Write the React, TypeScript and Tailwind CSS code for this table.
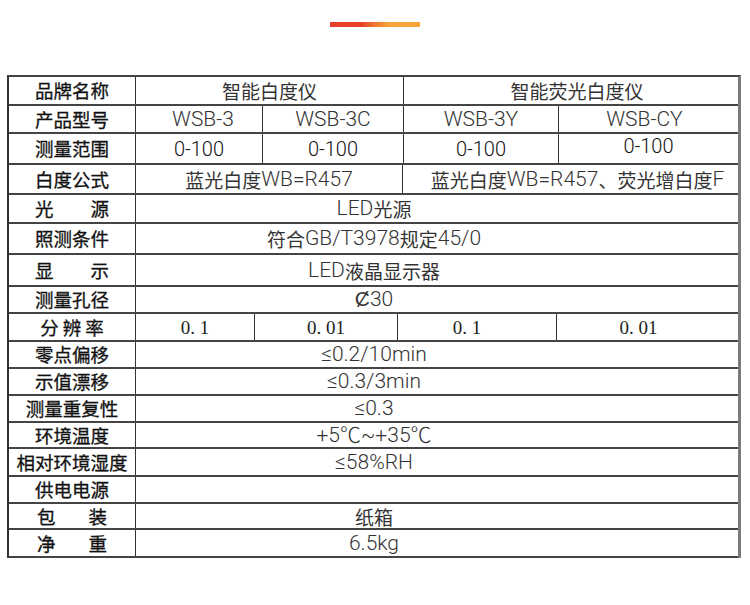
import React from "react";

type Cell = { w?: number; text: string; kind?: "sans" | "mono" | "num"; extra?: string };
type Row = { h: number; label: React.ReactNode; cells: Cell[] };

const sp2 = (a: string, b: string, w = 74) => (
  <span className="flex justify-between" style={{ width: w }}>
    <span>{a}</span>
    <span>{b}</span>
  </span>
);

const FULL = "pr-[126px]";

const rows: Row[] = [
  { h: 29, label: "品牌名称", cells: [{ w: 268, text: "智能白度仪" }, { text: "智能荧光白度仪", extra: "pl-[12px]" }] },
  {
    h: 28,
    label: "产品型号",
    cells: [
      { w: 127, text: "WSB-3", extra: "pl-[8px]" },
      { w: 141, text: "WSB-3C" },
      { w: 155, text: "WSB-3Y" },
      { text: "WSB-CY", extra: "pr-[8px]" },
    ],
  },
  {
    h: 31,
    label: "测量范围",
    cells: [
      { w: 127, text: "0-100", kind: "num" },
      { w: 141, text: "0-100", kind: "num" },
      { w: 155, text: "0-100", kind: "num" },
      { text: "0-100", kind: "num", extra: "pb-[5px]" },
    ],
  },
  { h: 30, label: "白度公式", cells: [{ w: 267, text: "蓝光白度WB=R457" }, { text: "蓝光白度WB=R457、荧光增白度F", extra: "pl-[14px]" }] },
  { h: 29, label: sp2("光", "源"), cells: [{ text: "LED光源", extra: FULL }] },
  { h: 31, label: "照测条件", cells: [{ text: "符合GB/T3978规定45/0", extra: FULL }] },
  { h: 32, label: sp2("显", "示"), cells: [{ text: "LED液晶显示器", extra: FULL }] },
  { h: 27, label: "测量孔径", cells: [{ text: "Ȼ30", extra: FULL }] },
  {
    h: 28,
    label: (
      <span className="flex gap-[4px]">
        <span>分</span>
        <span>辨</span>
        <span>率</span>
      </span>
    ),
    cells: [
      { w: 119, text: "0. 1", kind: "mono" },
      { w: 143, text: "0. 01", kind: "mono" },
      { w: 159, text: "0. 1", kind: "mono", extra: "pr-[20px]" },
      { text: "0. 01", kind: "mono", extra: "pr-[18px]" },
    ],
  },
  { h: 27, label: "零点偏移", cells: [{ text: "≤0.2/10min", extra: FULL }] },
  { h: 27, label: "示值漂移", cells: [{ text: "≤0.3/3min", extra: FULL }] },
  { h: 27, label: "测量重复性", cells: [{ text: "≤0.3", extra: FULL }] },
  { h: 26, label: "环境温度", cells: [{ text: "+5℃~+35℃", extra: FULL }] },
  { h: 28, label: "相对环境湿度", cells: [{ text: "≤58%RH", extra: FULL }] },
  { h: 27, label: "供电电源", cells: [{ text: "", extra: FULL }] },
  { h: 26, label: sp2("包", "装", 70), cells: [{ text: "纸箱", extra: FULL }] },
  { h: 28, label: sp2("净", "重", 70), cells: [{ text: "6.5kg", extra: FULL }] },
];

function splitRuns(s: string) {
  const out: { cjk: boolean; t: string }[] = [];
  for (const ch of Array.from(s)) {
    const cjk = /[\u3000-\u30ff\u3400-\u9fff\uff00-\uffef]/.test(ch);
    const last = out[out.length - 1];
    if (last && last.cjk === cjk) last.t += ch;
    else out.push({ cjk, t: ch });
  }
  return out;
}

function Mixed({ text, num }: { text: string; num?: boolean }) {
  return (
    <>
      {splitRuns(text).map((r, i) =>
        r.cjk ? (
          <span key={i} className="font-['Noto_Sans_CJK_SC',sans-serif] text-[19px] font-normal">
            {r.t}
          </span>
        ) : (
          <span
            key={i}
            className={
              num
                ? "font-['Roboto','Noto_Sans_CJK_SC',sans-serif] text-[20px] font-light text-[#111]"
                : "font-['Roboto','Noto_Sans_CJK_SC',sans-serif] text-[21px] font-light"
            }
          >
            {r.t}
          </span>
        )
      )}
    </>
  );
}

function ValueCell({ c, last }: { c: Cell; last: boolean }) {
  const font =
    c.kind === "mono"
      ? "font-['Liberation_Serif',serif] text-[19px] text-[#222] font-normal whitespace-pre"
      : "text-[#333]";
  return (
    <div
      className={`flex items-center justify-center h-full whitespace-nowrap leading-none ${font} ${
        last ? "flex-1 min-w-0" : "shrink-0 border-r border-[#333]"
      } ${c.extra ?? ""}`}
      style={c.w ? { width: c.w } : undefined}
    >
      {c.kind === "mono" ? c.text : <Mixed text={c.text} num={c.kind === "num"} />}
    </div>
  );
}

export default function App() {
  return (
    <div className="w-[750px] h-[605px] bg-white overflow-hidden">
      <div className="flex justify-center pt-[22px]">
        <div className="w-[90px] h-[5px] bg-gradient-to-r from-[#e6402a] from-35% to-[#f7a53a] to-65%" />
      </div>
      <div className="ml-[7px] mt-[48px] w-[734px] border-t-2 border-t-[#444] border-l-2 border-l-[#333] border-r-[3px] border-r-[#7a7a7a]">
        {rows.map((r, i) => (
          <div key={i} className="flex border-b-2 border-[#444]" style={{ height: r.h }}>
            <div className="w-[127px] shrink-0 border-r border-[#333] flex items-center justify-center font-['Noto_Sans_CJK_SC',sans-serif] font-normal [-webkit-text-stroke:0.3px_#111] text-[18.5px] text-[#111] leading-none whitespace-nowrap">
              {r.label}
            </div>
            {r.cells.map((c, j) => (
              <ValueCell key={j} c={c} last={j === r.cells.length - 1} />
            ))}
          </div>
        ))}
      </div>
    </div>
  );
}
